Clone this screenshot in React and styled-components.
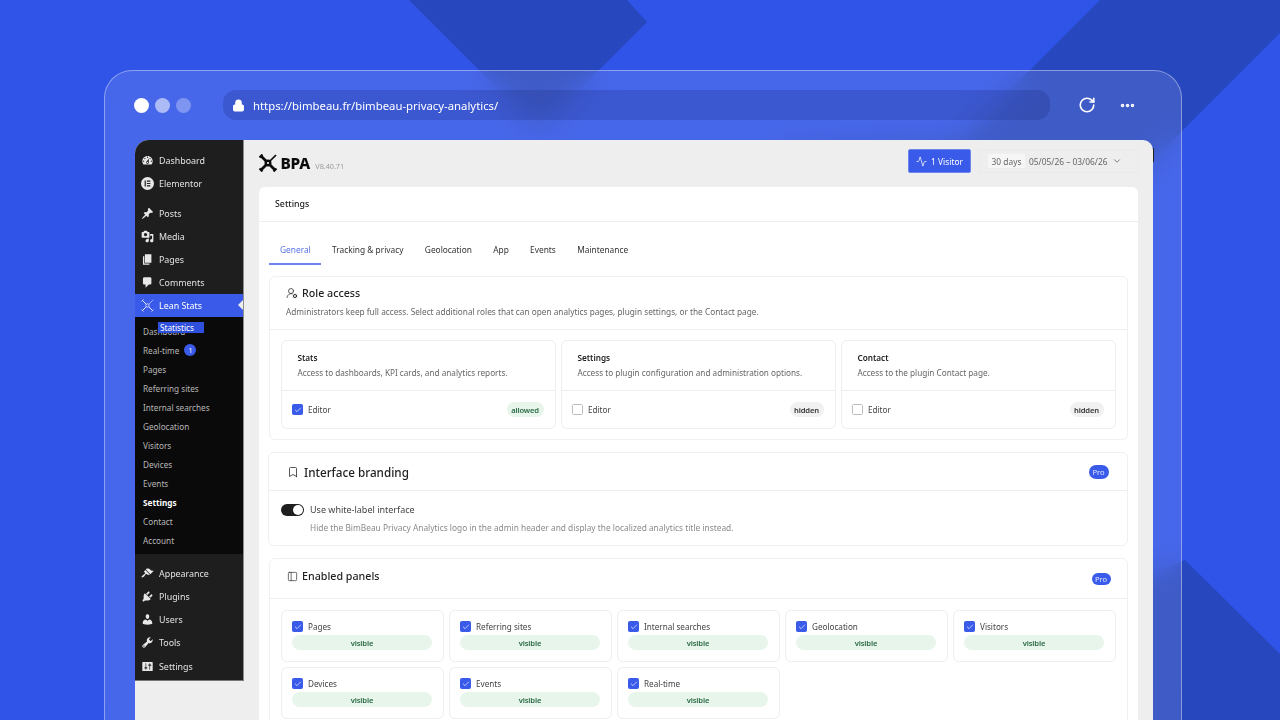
import React from "react";
import styled, { createGlobalStyle } from "styled-components";
import { Lock, RotateCw, Ellipsis, Activity, ChevronDown, UserRoundCog, Bookmark, PanelLeft, Check } from "lucide-react";

const Global = createGlobalStyle`
  html, body { margin: 0; padding: 0; width: 1280px; height: 720px; overflow: hidden; }
  body { font-family: "Noto Sans", "Open Sans", sans-serif; background: #3054e8; }
  * { box-sizing: border-box; }
`;

const Page = styled.div`
  position: relative;
  width: 1280px;
  height: 720px;
  overflow: hidden;
  background: #3054e8;
`;
const Shapes = styled.svg`
  position: absolute;
  inset: 0;
`;
const Browser = styled.div`
  position: relative;
  width: 1078px;
  height: 720px;
  margin: 0 0 0 104px;
  top: 70px;
  padding: 19px 28px 0 30px;
  border: 1px solid rgba(255, 255, 255, 0.38);
  border-radius: 28px 28px 0 0;
  background: rgba(255, 255, 255, 0.115);
  backdrop-filter: blur(14px);
`;
const Chrome = styled.div`
  display: flex;
  align-items: center;
  height: 30px;
  margin: 0 0 20px -1px;
`;
const Dots = styled.div`
  display: flex;
  gap: 6px;
  margin-right: 32px;
`;
const Dot = styled.span`
  width: 15px;
  height: 15px;
  border-radius: 50%;
  background: #fff;
  opacity: ${(p) => p.$alpha};
`;
const UrlBar = styled.div`
  display: flex;
  align-items: center;
  width: 827px;
  height: 30px;
  padding-left: 9px;
  gap: 8px;
  border-radius: 13px;
  background: rgba(28, 44, 130, 0.25);
  color: #fff;
  font-size: 11.35px;
`;
const ChromeActions = styled.div`
  display: flex;
  align-items: center;
  gap: 23px;
  margin-left: 28px;
  color: #fff;
`;
const Screen = styled.div`
  position: relative;
  display: flex;
  align-items: flex-start;
  width: 1018px;
  height: 640px;
  border-radius: 14px 10px 0 0;
  background: #eeeeee;
`;
const EdgeMark = styled.span`
  position: absolute;
  right: -1px;
  top: 8px;
  width: 1px;
  height: 14px;
  background: #222;
`;
const Sidebar = styled.nav`
  flex: none;
  width: 108.5px;
  padding: 8.5px 0 2.5px;
  border-radius: 14px 0 0 0;
  border-right: 1px solid #8d8d8d;
  border-bottom: 1px solid #777;
  background: #1e1e1e;
`;
const MenuRow = styled.div`
  position: relative;
  display: flex;
  align-items: center;
  height: 23.15px;
  padding-left: 6px;
  gap: 5px;
  color: ${(p) => (p.$active ? "#fff" : "#e2e2e2")};
  background: ${(p) => (p.$active ? "#3a5be9" : "transparent")};
  font-size: 8.9px;
  margin-top: ${(p) => p.$top || 0}px;
`;
const MenuIcon = styled.svg`
  flex: none;
  width: 13px;
  height: 13px;
  fill: #e8e8e8;
`;
const ActiveArrow = styled.span`
  position: absolute;
  right: 0;
  top: 6px;
  border: 5.5px solid transparent;
  border-right-color: #eeeeee;
  border-left-width: 0;
`;
const SubMenu = styled.div`
  position: relative;
  padding: 4.5px 0 4px;
  background: #0a0a0a;
`;
const SubRow = styled.div`
  display: flex;
  align-items: center;
  height: 19px;
  padding-left: 8px;
  gap: 5px;
  color: ${(p) => (p.$current ? "#fff" : "#b8b8b8")};
  font-size: 8.2px;
  font-weight: ${(p) => (p.$current ? 700 : 400)};
`;
const CountBadge = styled.span`
  display: grid;
  place-items: center;
  width: 12px;
  height: 12px;
  border-radius: 50%;
  background: #3a5be9;
  color: #fff;
  font-size: 7px;
`;
const Tooltip = styled.span`
  position: absolute;
  left: 23px;
  top: 5px;
  width: 46px;
  height: 11px;
  padding-left: 2px;
  background: #2f50dc;
  color: #fff;
  font-size: 8.2px;
  line-height: 11px;
`;
const Main = styled.main`
  flex: 1;
  min-width: 0;
  padding: 9px 15px 0 15.5px;
`;
const TopBar = styled.header`
  display: flex;
  align-items: center;
  height: 24px;
  margin-bottom: 14px;
`;
const Brand = styled.div`
  display: flex;
  align-items: center;
  margin-top: 3px;
  color: #0b0b0b;
`;
const BrandName = styled.span`
  margin-left: 3.5px;
  font-size: 15.5px;
  font-weight: 800;
  letter-spacing: -0.02em;
`;
const Version = styled.span`
  margin: 6px 0 0 5.5px;
  color: #9a9a9a;
  font-size: 7.2px;
`;
const VisitorButton = styled.div`
  display: flex;
  align-items: center;
  justify-content: center;
  gap: 4px;
  width: 63px;
  height: 24px;
  margin-left: auto;
  border: 1px solid #6d86ee;
  border-radius: 2px;
  background: #3a5be9;
  color: #fff;
  font-size: 8.4px;
`;
const DatePicker = styled.div`
  display: flex;
  align-items: center;
  width: 159px;
  height: 24px;
  margin-left: 8px;
  padding-left: 8px;
  border: 1px solid #eaeaea;
  color: #666;
  font-size: 8.4px;
`;
const DateChip = styled.span`
  display: flex;
  align-items: center;
  justify-content: center;
  width: 37px;
  height: 14px;
  margin-right: 4px;
  background: #f6f6f6;
`;
const DateArrow = styled.span`
  display: flex;
  margin-left: 4px;
`;
const Panel = styled.div`
  height: 600px;
  border-radius: 6px 6px 0 0;
  background: #fff;
`;
const PanelHead = styled.div`
  display: flex;
  align-items: center;
  height: 35px;
  padding: 0 0 0 16px;
  border-bottom: 1px solid #eeeeee;
  color: #222;
  font-size: 8.8px;
  font-weight: 500;
`;
const Tabs = styled.div`
  display: flex;
  height: 43px;
  margin: 0 0 11px 10px;
  padding-top: 14px;
`;
const Tab = styled.div`
  height: 29px;
  padding: 8px 10.3px 0 11px;
  border-bottom: 2px solid ${(p) => (p.$active ? "#6c84ef" : "transparent")};
  color: ${(p) => (p.$active ? "#5a72e6" : "#333")};
  font-size: 8.35px;
`;
const Section = styled.section`
  margin: 0 10.5px ${(p) => p.$gap || 0}px ${(p) => p.$left || 10}px;
  border: 1px solid #f0f0f0;
  border-radius: 6px;
  padding-bottom: ${(p) => p.$pad || 10}px;
`;
const RoleHead = styled.div`
  height: 53px;
  padding: 9px 16px 0;
  border-bottom: 1px solid #eeeeee;
`;
const HeadTitle = styled.div`
  display: flex;
  align-items: center;
  gap: ${(p) => p.$gap || 4}px;
  margin-bottom: ${(p) => p.$lift || 0}px;
  color: #1f1f1f;
  font-size: ${(p) => p.$size || 10.7}px;
  font-weight: 500;
`;
const HeadDesc = styled.div`
  margin-top: 5.5px;
  color: #666;
  font-size: 8.27px;
`;
const HeadRow = styled.div`
  display: flex;
  align-items: center;
  justify-content: space-between;
  height: ${(p) => p.$height}px;
  padding: 0 ${(p) => p.$right}px 0 ${(p) => p.$left}px;
  border-bottom: 1px solid #eeeeee;
`;
const ProBadge = styled.span`
  display: grid;
  place-items: center;
  width: ${(p) => p.$w}px;
  height: ${(p) => p.$h}px;
  margin-top: ${(p) => p.$drop || 0}px;
  border-radius: 8px;
  background: #3a5be9;
  color: #dfe5ff;
  font-size: 7.6px;
`;
const RoleGrid = styled.div`
  display: grid;
  grid-template-columns: repeat(3, 274.5px);
  column-gap: 5.5px;
  padding: 10px 11px 0;
`;
const RoleCard = styled.div`
  height: 89px;
  border: 1px solid #eeeeee;
  border-radius: 6px;
`;
const RoleInfo = styled.div`
  height: 50px;
  padding: 11px 15.5px 0;
  border-bottom: 1px solid #eeeeee;
`;
const RoleName = styled.div`
  color: #222;
  font-size: 8.2px;
  font-weight: 600;
`;
const RoleDesc = styled.div`
  margin-top: 4px;
  color: #666;
  font-size: 8.2px;
`;
const RoleFoot = styled.div`
  display: flex;
  align-items: center;
  justify-content: space-between;
  height: 37px;
  padding: 0 11px 0 10px;
`;
const CheckLabel = styled.label`
  display: flex;
  align-items: center;
  gap: 5px;
  color: #444;
  font-size: 8.15px;
`;
const Box = styled.span`
  display: grid;
  place-items: center;
  width: 11px;
  height: 11px;
  border-radius: 1.5px;
  border: 1px solid ${(p) => (p.$on ? "#3a5be9" : "#bdbdbd")};
  background: ${(p) => (p.$on ? "#3a5be9" : "#fff")};
  color: #fff;
`;
const Pill = styled.span`
  display: grid;
  place-items: center;
  min-width: ${(p) => p.$w || 37}px;
  height: 15px;
  border-radius: 8px;
  background: ${(p) => (p.$muted ? "#f1f1f1" : "#e8f5ea")};
  color: ${(p) => (p.$muted ? "#333" : "#2a6a46")};
  font-size: 7.6px;
  font-weight: 600;
  letter-spacing: -0.02em;
`;
const ToggleBody = styled.div`
  padding: 12px 12px 0;
`;
const ToggleRow = styled.div`
  display: flex;
  align-items: center;
  gap: 6px;
  color: #444;
  font-size: 9px;
`;
const Toggle = styled.span`
  position: relative;
  width: 23px;
  height: 12px;
  border-radius: 6px;
  background: #1e1e1e;
  &::after {
    content: "";
    position: absolute;
    right: 1px;
    top: 1px;
    width: 10px;
    height: 10px;
    border-radius: 50%;
    background: #fff;
  }
`;
const ToggleHint = styled.div`
  margin: 6px 0 0 29px;
  color: #8a8a8a;
  font-size: 8.36px;
`;
const PanelGrid = styled.div`
  display: grid;
  grid-template-columns: repeat(5, 163px);
  grid-auto-rows: 52px;
  gap: 5px;
  padding: 11px 11px 0;
`;
const PanelCard = styled.div`
  display: flex;
  flex-direction: column;
  padding: 10px 11px 0 10px;
  border: 1px solid #eeeeee;
  border-radius: 6px;
`;
const WidePill = styled(Pill)`
  margin-top: 3px;
  width: 100%;
`;

const DASH = {
  dashboard: "M3.76 16h12.48c1.1-1.37 1.76-3.11 1.76-5 0-4.42-3.58-8-8-8s-8 3.58-8 8c0 1.89.66 3.63 1.76 5zM10 4c.55 0 1 .45 1 1s-.45 1-1 1-1-.45-1-1 .45-1 1-1zM6 6c.55 0 1 .45 1 1s-.45 1-1 1-1-.45-1-1 .45-1 1-1zm8 0c.55 0 1 .45 1 1s-.45 1-1 1-1-.45-1-1 .45-1 1-1zm-5.37 5.55L12 7v6c0 1.1-.9 2-2 2s-2-.9-2-2c0-.57.24-1.08.63-1.45zM4 10c.55 0 1 .45 1 1s-.45 1-1 1-1-.45-1-1 .45-1 1-1zm12 0c.55 0 1 .45 1 1s-.45 1-1 1-1-.45-1-1 .45-1 1-1zm-5 3c0-.55-.45-1-1-1s-1 .45-1 1 .45 1 1 1 1-.45 1-1z",
  pin: "M10.44 3.02l1.82-1.82 6.36 6.35-1.83 1.82c-1.05-.68-2.48-.57-3.41.36l-.75.75c-.92.93-1.04 2.35-.35 3.41l-1.83 1.82-2.41-2.41-2.8 2.79c-.42.42-3.38 2.71-3.8 2.29s1.86-3.39 2.28-3.81l2.79-2.79L4.1 9.36l1.83-1.82c1.05.69 2.48.57 3.4-.36l.75-.75c.93-.92 1.05-2.35.36-3.41z",
  media: "M13 11V4c0-.55-.45-1-1-1h-1.67L9 1H5L3.67 3H2c-.55 0-1 .45-1 1v7c0 .55.45 1 1 1h10c.55 0 1-.45 1-1zM7 4.5c1.38 0 2.5 1.12 2.5 2.5S8.38 9.5 7 9.5 4.5 8.38 4.5 7 5.62 4.5 7 4.5zM14 6h5v10.5c0 1.38-1.12 2.5-2.5 2.5S14 17.88 14 16.5s1.12-2.5 2.5-2.5c.17 0 .34.02.5.05V9h-3V6zm-4 8.05V13h2v3.5c0 1.38-1.12 2.5-2.5 2.5S7 17.88 7 16.5 8.12 14 9.5 14c.17 0 .34.02.5.05z",
  page: "M6 15V2h10v13H6zm-1 1h8v2H3V5h2v11z",
  comments: "M5 2h9c1.1 0 2 .9 2 2v7c0 1.1-.9 2-2 2h-2l-5 5v-5H5c-1.1 0-2-.9-2-2V4c0-1.1.9-2 2-2z",
  appearance: "M14.48 11.06L7.41 3.99l1.5-1.5c.5-.56 2.3-.47 3.51.32 1.21.8 1.43 1.28 2.91 2.1 1.18.64 2.45 1.26 4.45.85zm-.71.71L6.7 4.7 4.93 6.47c-.39.39-.39 1.02 0 1.41l1.06 1.06c.39.39.39 1.03 0 1.42-.6.6-1.43 1.11-2.21 1.69-.35.26-.7.53-1.01.84C1.43 13.23.4 14.91 1.2 15.7c.8.79 2.48-.23 3.82-1.57.31-.31.58-.66.84-1.01.58-.78 1.09-1.61 1.69-2.21.39-.39 1.02-.39 1.41 0l1.06 1.06c.39.39 1.02.39 1.41 0z",
  plugins: "M13.11 4.36L9.87 7.6 8 5.73l3.24-3.24c.35-.34 1.05-.2 1.56.32.52.51.66 1.21.31 1.55zm-8 1.77l.91-1.12 9.01 9.01-1.19.84c-.71.71-2.63 1.16-3.82 1.16H6.14L4.9 17.26c-.59.59-1.54.59-2.12 0-.59-.58-.59-1.53 0-2.12l1.24-1.24v-3.88c0-1.13.4-3.19 1.09-3.89zm7.26 3.97l3.24-3.24c.34-.35 1.04-.21 1.55.31.52.51.66 1.21.31 1.55l-3.24 3.25z",
  users: "M10 9.25c-2.27 0-2.73-3.44-2.73-3.44C7 4.02 7.82 2 9.97 2c2.16 0 2.98 2.02 2.71 3.81 0 0-.41 3.44-2.68 3.44zm0 2.57L12.72 10c2.39 0 4.52 2.33 4.52 4.53v2.49s-3.65 1.13-7.24 1.13c-3.65 0-7.24-1.13-7.24-1.13v-2.49c0-2.25 1.94-4.48 4.47-4.48z",
  tools: "M16.68 9.77c-1.34 1.34-3.3 1.67-4.95.99l-5.41 6.52c-.99.99-2.59.99-3.58 0s-.99-2.59 0-3.57l6.52-5.42c-.68-1.65-.35-3.61.99-4.95 1.28-1.28 3.12-1.62 4.72-1.06l-2.89 2.89 2.82 2.82 2.86-2.87c.53 1.58.18 3.39-1.08 4.65zM3.81 16.21c.4.39 1.04.39 1.43 0 .4-.4.4-1.04 0-1.43-.39-.4-1.03-.4-1.43 0-.39.39-.39 1.03 0 1.43z",
  settings: "M18 16V4c0-.55-.45-1-1-1H3c-.55 0-1 .45-1 1v12c0 .55.45 1 1 1h14c.55 0 1-.45 1-1zM8 11h1c.55 0 1 .45 1 1s-.45 1-1 1H8v1.5c0 .28-.22.5-.5.5s-.5-.22-.5-.5V13H6c-.55 0-1-.45-1-1s.45-1 1-1h1V5.5c0-.28.22-.5.5-.5s.5.22.5.5V11zm5-2h-1c-.55 0-1-.45-1-1s.45-1 1-1h1V5.5c0-.28.22-.5.5-.5s.5.22.5.5V7h1c.55 0 1 .45 1 1s-.45 1-1 1h-1v5.5c0 .28-.22.5-.5.5s-.5-.22-.5-.5V9z",
  elementor: "M10 0a10 10 0 1 0 0 20 10 10 0 0 0 0-20zM7.4 14.6H5.6V5.4h1.8v9.2zm7 0H9v-1.8h5.4v1.8zm0-3.7H9V9.1h5.4v1.8zm0-3.7H9V5.4h5.4v1.8z",
};

const DashIcon = ({ name }) => (
  <MenuIcon viewBox="0 0 20 20" aria-hidden="true">
    <path d={DASH[name]} fillRule="evenodd" />
  </MenuIcon>
);

const BrandMark = ({ color = "#0b0b0b", size = 18, weight = 2.8 }) => (
  <svg width={size} height={size} viewBox="0 0 18 18" fill="none" stroke={color} aria-hidden="true">
    <path d="M2 2L7 7M11 11L16 16M2 16L7 11" strokeWidth={weight} />
    <path d="M11 7L17 1" strokeWidth={weight * 0.6} />
    <path d="M0.5 3.5L3.5 0.5M0.5 14.5L3.5 17.5M14.5 17.5L17.5 14.5" strokeWidth={weight * 0.75} />
    <circle cx="9" cy="9" r="2.3" strokeWidth={weight * 0.85} />
  </svg>
);

const topMenu = [
  { icon: "dashboard", label: "Dashboard" },
  { icon: "elementor", label: "Elementor" },
  { icon: "pin", label: "Posts", top: 7 },
  { icon: "media", label: "Media" },
  { icon: "page", label: "Pages" },
  { icon: "comments", label: "Comments" },
];
const bottomMenu = [
  { icon: "appearance", label: "Appearance", top: 8 },
  { icon: "plugins", label: "Plugins" },
  { icon: "users", label: "Users" },
  { icon: "tools", label: "Tools" },
  { icon: "settings", label: "Settings" },
];
const subMenu = ["Dashboard", "Real-time", "Pages", "Referring sites", "Internal searches", "Geolocation", "Visitors", "Devices", "Events", "Settings", "Contact", "Account"];
const tabs = ["General", "Tracking & privacy", "Geolocation", "App", "Events", "Maintenance"];
const roles = [
  { name: "Stats", desc: "Access to dashboards, KPI cards, and analytics reports.", on: true },
  { name: "Settings", desc: "Access to plugin configuration and administration options.", on: false },
  { name: "Contact", desc: "Access to the plugin Contact page.", on: false },
];
const panels = ["Pages", "Referring sites", "Internal searches", "Geolocation", "Visitors", "Devices", "Events", "Real-time"];

const CheckBox = ({ on }) => <Box $on={on}>{on && <Check size={8} strokeWidth={2} />}</Box>;

export default function App() {
  return (
    <Page>
      <Global />
      <Shapes width="1280" height="720" viewBox="0 0 1280 720" aria-hidden="true">
        <path fill="#2747bf" d="M409 0H627L647 22L539 130Z" />
        <path fill="#2747bf" d="M1100 0H1280V33L1080 233H800L780 150L960 140Z" />
        <path fill="#2747bf" d="M1185 560L1280 654V720H1040V620Z" />
      </Shapes>
      <Browser>
        <Chrome>
          <Dots>
            <Dot $alpha={1} />
            <Dot $alpha={0.55} />
            <Dot $alpha={0.3} />
          </Dots>
          <UrlBar>
            <Lock size={13} fill="#fff" strokeWidth={2} />
            https://bimbeau.fr/bimbeau-privacy-analytics/
          </UrlBar>
          <ChromeActions>
            <RotateCw size={18} strokeWidth={2.2} />
            <Ellipsis size={17} strokeWidth={3} />
          </ChromeActions>
        </Chrome>
        <Screen>
          <EdgeMark />
          <Sidebar>
            {topMenu.map((m) => (
              <MenuRow key={m.label} $top={m.top}>
                <DashIcon name={m.icon} />
                {m.label}
              </MenuRow>
            ))}
            <MenuRow $active>
              <BrandMark color="#fff" size={13} weight={1.2} />
              Lean Stats
              <ActiveArrow />
            </MenuRow>
            <SubMenu>
              {subMenu.map((s) => (
                <SubRow key={s} $current={s === "Settings"}>
                  {s}
                  {s === "Real-time" && <CountBadge>1</CountBadge>}
                </SubRow>
              ))}
              <Tooltip>Statistics</Tooltip>
            </SubMenu>
            {bottomMenu.map((m) => (
              <MenuRow key={m.label} $top={m.top}>
                <DashIcon name={m.icon} />
                {m.label}
              </MenuRow>
            ))}
          </Sidebar>
          <Main>
            <TopBar>
              <Brand>
                <BrandMark />
                <BrandName>BPA</BrandName>
                <Version>V8.40.71</Version>
              </Brand>
              <VisitorButton>
                <Activity size={11} strokeWidth={1.6} />1 Visitor
              </VisitorButton>
              <DatePicker>
                <DateChip>30 days</DateChip>
                05/05/26 – 03/06/26
                <DateArrow>
                  <ChevronDown size={10} />
                </DateArrow>
              </DatePicker>
            </TopBar>
            <Panel>
              <PanelHead>Settings</PanelHead>
              <Tabs>
                {tabs.map((t, i) => (
                  <Tab key={t} $active={i === 0}>
                    {t}
                  </Tab>
                ))}
              </Tabs>
              <Section $gap={12}>
                <RoleHead>
                  <HeadTitle>
                    <UserRoundCog size={12} strokeWidth={1.4} />
                    Role access
                  </HeadTitle>
                  <HeadDesc>Administrators keep full access. Select additional roles that can open analytics pages, plugin settings, or the Contact page.</HeadDesc>
                </RoleHead>
                <RoleGrid>
                  {roles.map((r) => (
                    <RoleCard key={r.name}>
                      <RoleInfo>
                        <RoleName>{r.name}</RoleName>
                        <RoleDesc>{r.desc}</RoleDesc>
                      </RoleInfo>
                      <RoleFoot>
                        <CheckLabel>
                          <CheckBox on={r.on} />
                          Editor
                        </CheckLabel>
                        <Pill $muted={!r.on} $w={r.on ? 37 : 34}>
                          {r.on ? "allowed" : "hidden"}
                        </Pill>
                      </RoleFoot>
                    </RoleCard>
                  ))}
                </RoleGrid>
              </Section>
              <Section $gap={12} $left={9} $pad={12}>
                <HeadRow $height={38} $left={18} $right={18}>
                  <HeadTitle $size={11.7} $gap={5}>
                    <Bookmark size={12} strokeWidth={1.5} />
                    Interface branding
                  </HeadTitle>
                  <ProBadge $w={20} $h={14}>Pro</ProBadge>
                </HeadRow>
                <ToggleBody>
                  <ToggleRow>
                    <Toggle />
                    Use white-label interface
                  </ToggleRow>
                  <ToggleHint>Hide the BimBeau Privacy Analytics logo in the admin header and display the localized analytics title instead.</ToggleHint>
                </ToggleBody>
              </Section>
              <Section>
                <HeadRow $height={40} $left={17} $right={16}>
                  <HeadTitle $lift={5}>
                    <PanelLeft size={11} strokeWidth={1.4} />
                    Enabled panels
                  </HeadTitle>
                  <ProBadge $w={19} $h={12} $drop={1}>Pro</ProBadge>
                </HeadRow>
                <PanelGrid>
                  {panels.map((p) => (
                    <PanelCard key={p}>
                      <CheckLabel>
                        <CheckBox on />
                        {p}
                      </CheckLabel>
                      <WidePill>visible</WidePill>
                    </PanelCard>
                  ))}
                </PanelGrid>
              </Section>
            </Panel>
          </Main>
        </Screen>
      </Browser>
    </Page>
  );
}
